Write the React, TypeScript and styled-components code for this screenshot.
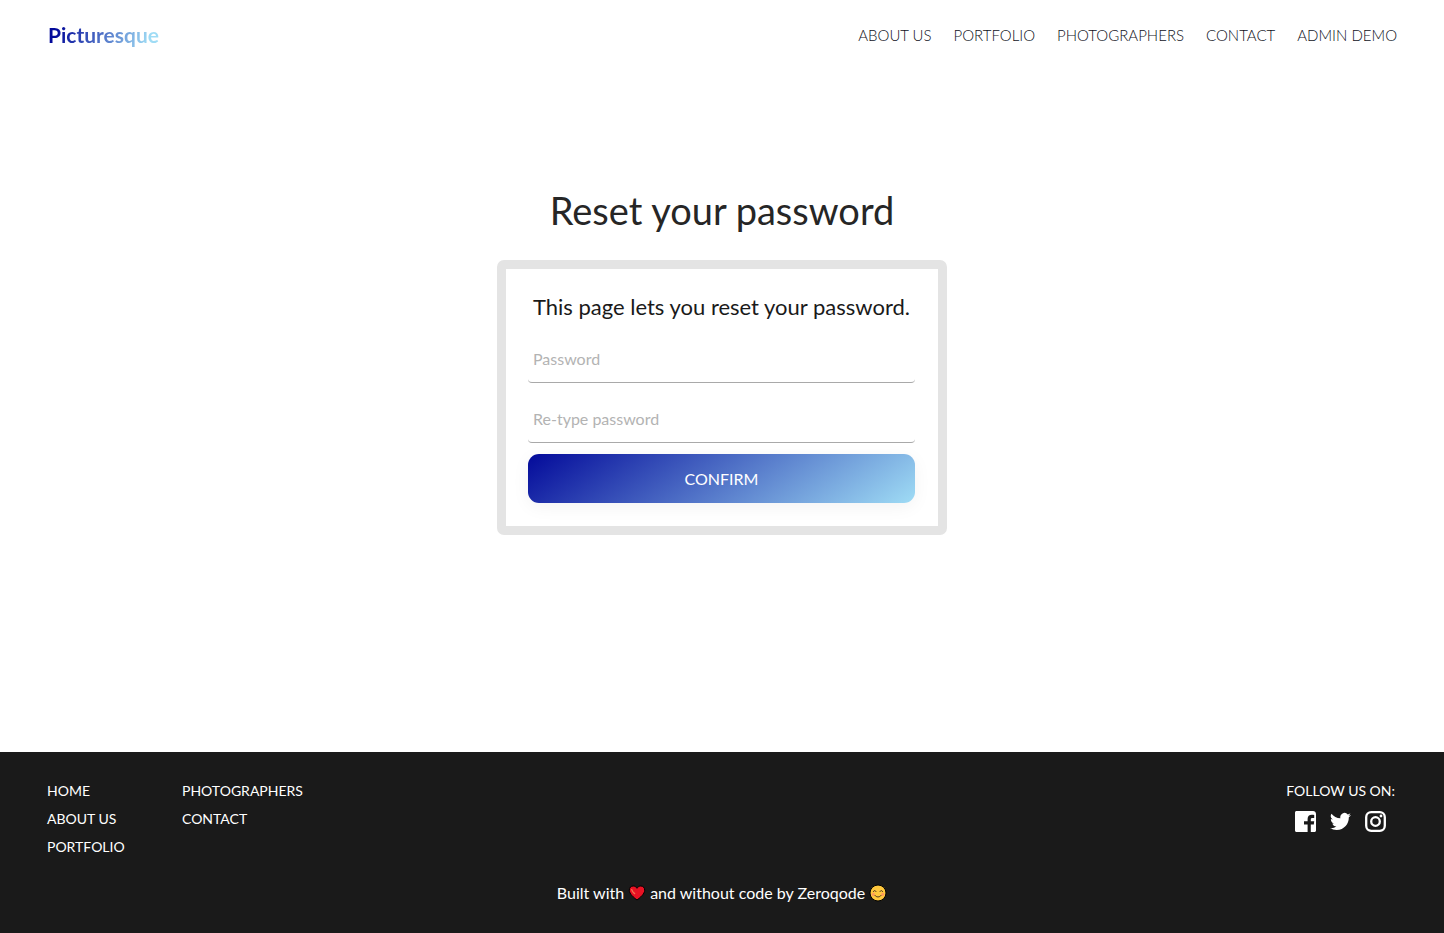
import React from "react";
import styled, { createGlobalStyle } from "styled-components";

const GlobalStyle = createGlobalStyle`
  *, *::before, *::after { box-sizing: border-box; }
  body { margin: 0; background: #fff; font-family: Lato, "Liberation Sans", sans-serif; }
  h1, h2, p, ul { margin: 0; padding: 0; }
`;

const Page = styled.div`
  min-height: 100vh;
  display: flex;
  flex-direction: column;
`;

const Header = styled.header`
  display: flex;
  align-items: center;
  justify-content: space-between;
  height: 70px;
  padding: 0 47px 0 48px;
`;

const Logo = styled.a`
  font-size: 21px;
  line-height: 24px;
  font-weight: 700;
  text-decoration: none;
  color: transparent;
  background: linear-gradient(110deg, #030a9a 10%, #9fdcf5 90%);
  background-clip: text;
  -webkit-background-clip: text;
`;

const Nav = styled.nav`
  display: flex;
  gap: 22px;
`;

const NavLink = styled.a`
  font-size: 15px;
  line-height: 24px;
  font-weight: 300;
  color: #10121c;
  text-decoration: none;
`;

const Main = styled.main`
  flex: 1;
  display: flex;
  flex-direction: column;
  align-items: center;
  padding: 116px 16px 64px;
`;

const Title = styled.h1`
  font-size: 38px;
  line-height: 48px;
  font-weight: 400;
  color: #262626;
  text-align: center;
`;

const Card = styled.form`
  width: 100%;
  max-width: 450px;
  margin-top: 26px;
  padding: 22px 23px 23px 22px;
  border: 9px solid #e4e4e4;
  border-radius: 7px;
  display: flex;
  flex-direction: column;
`;

const Intro = styled.h2`
  font-size: 22px;
  line-height: 32px;
  font-weight: 400;
  color: #1a1a1a;
  text-align: center;
  margin-bottom: 11px;
`;

const Field = styled.input`
  width: 100%;
  height: 49px;
  margin-bottom: 11px;
  padding: 0 5px;
  border: 0;
  border-bottom: 1px solid #a9a9a9;
  border-radius: 4px;
  background: transparent;
  font: 400 16px/24px Lato, "Liberation Sans", sans-serif;
  color: #262626;
  &::placeholder { color: #b3b3b3; opacity: 1; }
`;

const Confirm = styled.button`
  height: 49px;
  border: 0;
  border-radius: 11px;
  background: linear-gradient(145deg, #030a9a 0%, #9fdcf5 100%);
  box-shadow: 0 4px 18px rgba(0, 0, 0, 0.05);
  color: #fff;
  font: 400 16px/24px Lato, "Liberation Sans", sans-serif;
`;

const Footer = styled.footer`
  background: #1a1a1a;
  color: #fff;
  padding: 29px 47px 28px;
`;

const FooterTop = styled.div`
  display: flex;
  justify-content: space-between;
`;

const LinkColumns = styled.div`
  display: grid;
  grid-template-columns: 135px auto;
`;

const LinkList = styled.ul`
  list-style: none;
  display: flex;
  flex-direction: column;
  gap: 8px;
`;

const FooterText = styled.div`
  font-size: 14px;
  line-height: 20px;
`;

const FooterLink = styled(FooterText).attrs({ as: "a" })<{ href: string }>`
  display: block;
  color: #fff;
  text-decoration: none;
`;

const Social = styled.div`
  display: flex;
  flex-direction: column;
  align-items: center;
  gap: 10px;
  padding-right: 2px;
`;

const Icons = styled.div`
  display: flex;
  gap: 14px;
`;

const IconLink = styled.a`
  display: flex;
  color: #fff;
`;

const Credit = styled.p`
  display: flex;
  align-items: center;
  justify-content: center;
  gap: 4px;
  margin-top: 24px;
  font-size: 16px;
  line-height: 24px;
`;

const Facebook = () => (
  <svg width="21" height="21" viewBox="0 0 21 21" fill="currentColor" aria-hidden="true">
    <path d="M1.500 0H18c1.700 0 3 1.300 3 3v16.500c0 .8-.7 1.500-1.500 1.500h-3.700v-7.500h3l.4-3.200h-3.400V8.500c0-1 .4-1.500 1.600-1.500h1.800V4c-.5-.1-1.400-.2-2.400-.2-2.600 0-4.200 1.500-4.200 4.200v2.300H9v3.200h3.600V21H1.500C.7 21 0 20.300 0 19.500v-18C0 .7.7 0 1.500 0z" />
  </svg>
);

const Twitter = () => (
  <svg width="21" height="21" viewBox="0 0 24 24" fill="currentColor" aria-hidden="true">
    <path d="M24 4.600a10 10 0 0 1-2.800.8 4.900 4.900 0 0 0 2.200-2.700c-1 .6-2 1-3.100 1.200a4.900 4.900 0 0 0-8.400 4.500C7.700 8.200 4.100 6.200 1.700 3.200a4.900 4.900 0 0 0 1.500 6.600c-.8 0-1.600-.3-2.200-.6v.1a4.900 4.900 0 0 0 3.900 4.800c-.7.2-1.500.2-2.200.1a4.900 4.900 0 0 0 4.600 3.400A9.900 9.900 0 0 1 0 19.500a14 14 0 0 0 7.500 2.200c9.100 0 14-7.500 14-14v-.6c1-.7 1.800-1.600 2.500-2.500z" />
  </svg>
);

const Instagram = () => (
  <svg width="21" height="21" viewBox="0 0 21 21" fill="none" stroke="currentColor" aria-hidden="true">
    <rect x="1.200" y="1.200" width="18.600" height="18.600" rx="5" strokeWidth="2.300" />
    <circle cx="10.500" cy="10.500" r="4.300" strokeWidth="2.300" />
    <circle cx="16" cy="5" r="1.400" fill="currentColor" stroke="none" />
  </svg>
);

const Heart = () => (
  <svg width="18" height="18" viewBox="0 0 18 18" role="img" aria-label="love">
    <path d="M9 16C6 13.600 1.300 10 1.300 6.200 1.300 3.700 3 2 5.200 2 6.800 2 8.200 2.900 9 4.300 9.800 2.900 11.200 2 12.800 2 15 2 16.700 3.700 16.700 6.200 16.700 10 12 13.600 9 16z" fill="#e81224" stroke="#000" strokeWidth="1" />
    <path d="M3.700 5.600c.4 1.500 1.500 2.900 2.900 4" fill="none" stroke="#f4704e" strokeWidth="1.400" strokeLinecap="round" />
  </svg>
);

const Smile = () => (
  <svg width="18" height="18" viewBox="0 0 18 18" role="img" aria-label="smile">
    <circle cx="9" cy="9" r="8" fill="#ffc83d" stroke="#000" strokeWidth="1" />
    <circle cx="4.300" cy="10.400" r="1.600" fill="#ff9a5c" />
    <circle cx="13.700" cy="10.400" r="1.600" fill="#ff9a5c" />
    <path d="M4.400 7.500c.6-1.300 2-1.300 2.600 0M11 7.500c.6-1.300 2-1.300 2.600 0M6 11.500c1.500 2 4.500 2 6 0" fill="none" stroke="#4a3520" strokeWidth="1" strokeLinecap="round" />
  </svg>
);

const navItems = ["ABOUT US", "PORTFOLIO", "PHOTOGRAPHERS", "CONTACT", "ADMIN DEMO"];
const footerColumns = [
  ["HOME", "ABOUT US", "PORTFOLIO"],
  ["PHOTOGRAPHERS", "CONTACT"],
];

export default function App() {
  return (
    <Page>
      <GlobalStyle />
      <Header>
        <Logo href="#home">Picturesque</Logo>
        <Nav>
          {navItems.map((item) => (
            <NavLink key={item} href="#">{item}</NavLink>
          ))}
        </Nav>
      </Header>
      <Main>
        <Title>Reset your password</Title>
        <Card onSubmit={(e: React.FormEvent) => e.preventDefault()}>
          <Intro>This page lets you reset your password.</Intro>
          <Field type="password" placeholder="Password" aria-label="Password" />
          <Field type="password" placeholder="Re-type password" aria-label="Re-type password" />
          <Confirm type="submit">CONFIRM</Confirm>
        </Card>
      </Main>
      <Footer>
        <FooterTop>
          <LinkColumns>
            {footerColumns.map((column) => (
              <LinkList key={column[0]}>
                {column.map((item) => (
                  <li key={item}><FooterLink href="#">{item}</FooterLink></li>
                ))}
              </LinkList>
            ))}
          </LinkColumns>
          <Social>
            <FooterText>FOLLOW US ON:</FooterText>
            <Icons>
              <IconLink href="#" aria-label="Facebook"><Facebook /></IconLink>
              <IconLink href="#" aria-label="Twitter"><Twitter /></IconLink>
              <IconLink href="#" aria-label="Instagram"><Instagram /></IconLink>
            </Icons>
          </Social>
        </FooterTop>
        <Credit>
          <span>Built with</span>
          <Heart />
          <span>and without code by Zeroqode</span>
          <Smile />
        </Credit>
      </Footer>
    </Page>
  );
}
